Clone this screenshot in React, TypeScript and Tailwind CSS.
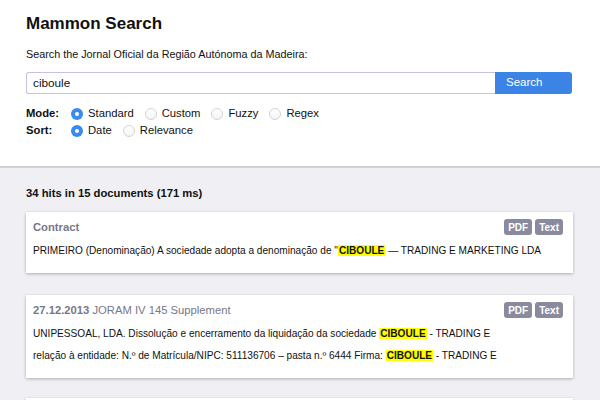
import type { ReactNode } from 'react'

const FONT = { fontFamily: '"Liberation Sans", Arial, Helvetica, sans-serif' }

function Radio({ checked, label }: { checked?: boolean; label: string }) {
  return (
    <label className="flex items-center gap-[5px]">
      {checked ? (
        <span className="flex h-[12px] w-[12px] items-center justify-center rounded-full bg-[#3a8bef]">
          <span className="h-[4px] w-[4px] rounded-full bg-white" />
        </span>
      ) : (
        <span className="h-[12px] w-[12px] rounded-full border border-[#d4d4d8] bg-gradient-to-b from-white to-[#f4f4f6]" />
      )}
      <span>{label}</span>
    </label>
  )
}

function Hl({ children }: { children: ReactNode }) {
  return <span className="bg-[#ffff00] px-[1px] font-bold">{children}</span>
}

function Badges() {
  return (
    <div className="flex gap-[3px] text-[10px] font-bold text-white">
      <span className="flex h-4 items-center rounded-[3px] bg-[#8a8a9f] px-[4px]">PDF</span>
      <span className="flex h-4 items-center rounded-[3px] bg-[#8a8a9f] px-[4px]">Text</span>
    </div>
  )
}

function Card({ title, lines }: { title: ReactNode; lines: ReactNode[] }) {
  return (
    <div className="bg-white pb-[11px] pl-[7px] pr-[10px] pt-[7px] shadow-[0_1px_3px_rgba(0,0,0,0.28)]">
      <div className="flex h-4 items-center justify-between">
        <div className="text-[#77778a]">{title}</div>
        <Badges />
      </div>
      <div className="mt-[5px] text-[10.1px] leading-[22px] text-[#111]">
        {lines.map((l, i) => (
          <div key={i}>{l}</div>
        ))}
      </div>
    </div>
  )
}

export default function App() {
  return (
    <div className="h-[400px] overflow-hidden bg-[#efeff4] text-[11.25px] text-[#111]" style={FONT}>
      <div className="border-b-2 border-[#cfcfd4] bg-white px-[26px] pb-[27px] pt-[13px]">
        <h1 className="h-[22px] text-[17px] font-bold leading-[22px]">Mammon Search</h1>
        <p className="mt-[11px] text-[10.8px] leading-4">Search the Jornal Oficial da Região Autónoma da Madeira:</p>
        <div className="mt-[10px] flex h-[22px] w-[546px]">
          <div className="flex flex-1 items-center rounded-l-[3px] border border-r-0 border-[#c3c3de] pl-[6px] text-[11.75px]">
            ciboule
          </div>
          <button className="w-[77px] rounded-r-[3px] bg-[#3b84e6] pl-[11px] text-left text-[11.5px] text-white">
            Search
          </button>
        </div>
        <div className="mt-[11px] flex h-[17px] items-center">
          <span className="w-[45px] font-bold">Mode:</span>
          <div className="flex items-center gap-[11px]">
            <Radio checked label="Standard" />
            <Radio label="Custom" />
            <Radio label="Fuzzy" />
            <Radio label="Regex" />
          </div>
        </div>
        <div className="flex h-[17px] items-center">
          <span className="w-[45px] font-bold">Sort:</span>
          <div className="flex items-center gap-[11px]">
            <Radio checked label="Date" />
            <Radio label="Relevance" />
          </div>
        </div>
      </div>

      <div className="px-[26px] pt-[17px]">
        <div className="h-4 font-bold leading-4">34 hits in 15 documents (171 ms)</div>
        <div className="mt-[11px] flex w-[547px] flex-col gap-[22px]">
          <Card
            title={<span className="font-bold">Contract</span>}
            lines={[
              <>
                PRIMEIRO (Denominação) A sociedade adopta a denominação de "<Hl>CIBOULE</Hl> — TRADING E MARKETING LDA
              </>,
            ]}
          />
          <Card
            title={
              <>
                <span className="font-bold">27.12.2013</span> JORAM IV 145 Supplement
              </>
            }
            lines={[
              <>
                UNIPESSOAL, LDA. Dissolução e encerramento da liquidação da sociedade <Hl>CIBOULE</Hl> - TRADING E
              </>,
              <>
                relação à entidade: N.º de Matrícula/NIPC: 511136706 – pasta n.º 6444 Firma: <Hl>CIBOULE</Hl> - TRADING E
              </>,
            ]}
          />
          <div className="-mt-[2px] h-[60px] bg-white shadow-[0_1px_3px_rgba(0,0,0,0.28)]" />
        </div>
      </div>
    </div>
  )
}
